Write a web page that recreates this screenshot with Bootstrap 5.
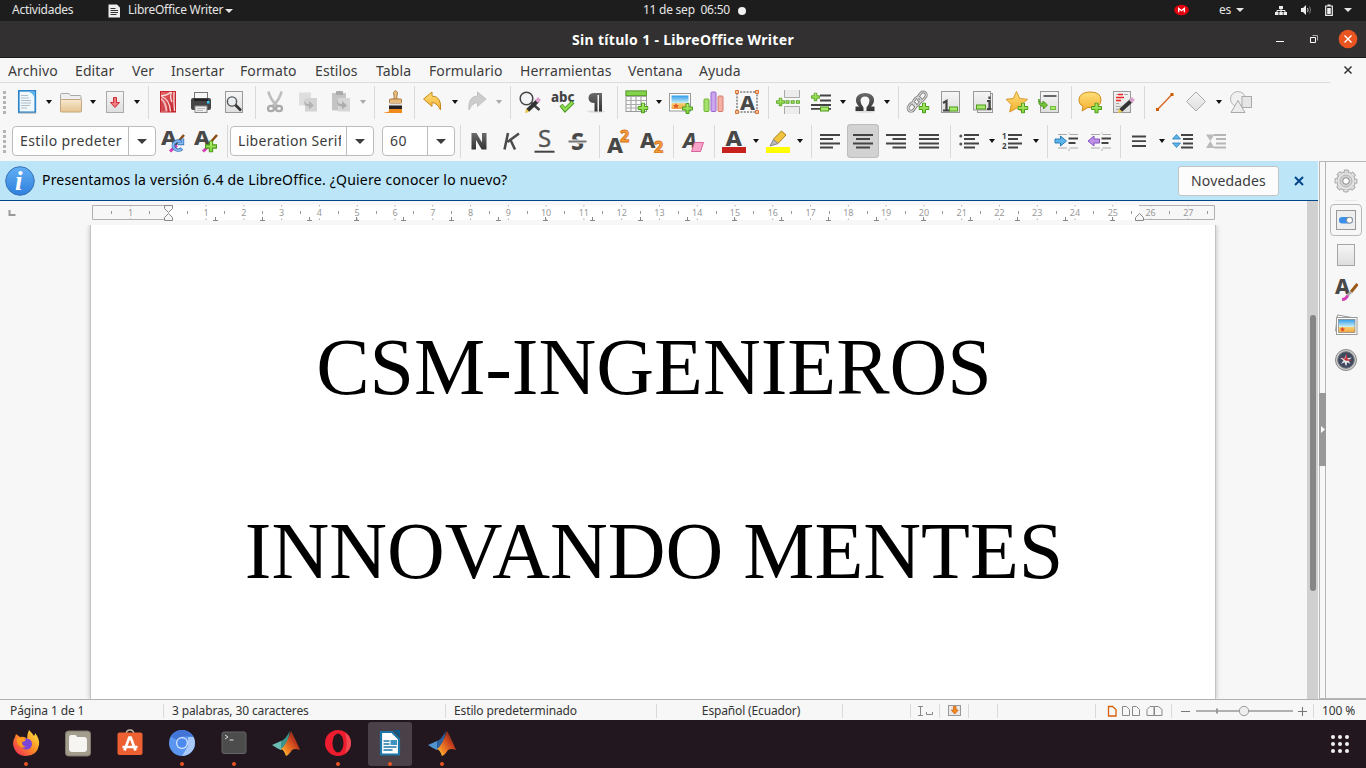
<!DOCTYPE html>
<html lang="es">
<head>
<meta charset="utf-8">
<meta name="viewport" content="width=device-width, initial-scale=1">
<title>Sin título 1 - LibreOffice Writer</title>
<link href="https://cdn.jsdelivr.net/npm/bootstrap@5.3.0/dist/css/bootstrap.min.css" rel="stylesheet">
<style>
html,body{height:100%}
body{width:1366px;height:768px;overflow:hidden;background:#f7f7f7;color:#3d3d3d;font:14px/1.2 "Noto Sans","Open Sans",sans-serif}
svg{display:block;flex:none}
svg text{font-family:"Noto Sans",sans-serif}
.panel{height:21px;background:#1d1d1d;color:#e6e6e6;font-size:12px;letter-spacing:-.25px}
.panel-cell{white-space:pre}
.panel .activities{width:107px;padding-left:12px}
.app-name{margin-left:7px;width:93px}
.panel .clock{margin-left:410px;width:95px}
.tray{padding-right:14px}
.lang{margin:0 6px 0 30px;width:11px}
.net{margin-left:31px}.vol{margin-left:13px}.bat{margin-left:13px}.last{margin-left:11px}
.titlebar{height:37px;background:#323031;border-bottom:1px solid #1c1a1b;color:#fff;font-weight:700;font-size:14px}
.wbtns{width:94px}
.win-title{letter-spacing:.32px;padding-top:2px}
.tri{width:0;height:0;border:4px solid transparent;border-top-color:currentColor;border-bottom:0}
.menus{height:25px;width:1330px;border-bottom:1px solid #dcdcdc;display:grid;grid-template-columns:67px 57px 39px 69px 75px 61px 53px 91px 108px 71px 60px;padding:2px 0 0 8px;letter-spacing:.1px}
.tools{height:38px;padding-left:3px}
.tools.second{height:40px}
.grip{width:3px;height:23px;margin-right:5px;background:repeating-linear-gradient(#b4b4b4 0 3px,transparent 3px 5px)}
.tb{width:32px;height:33px;display:flex;align-items:center;justify-content:center}
.tb + .tb{margin-left:1px}
.tb.on{background:#d2d2d2;border-radius:4px;box-shadow:0 0 0 1px #bdbdbd inset;height:34px}
.dd{width:12px;display:flex;justify-content:center;color:#111}
.dd.off{color:#aaa}
.dd .tri{border-width:4px 3.5px 0}
.vsep{width:9px;height:33px;padding-left:5px}
.vsep::before{content:"";display:block;width:1px;height:100%;background:#d9d9d9}
.vsep.tight{width:8px}
.combo{height:30px;background:#fff;border:1px solid #bcbcbc;border-radius:4px;white-space:nowrap}
.combo .val{margin-left:7px;width:103px;overflow:hidden;height:100%;line-height:27px;letter-spacing:.38px}
.combo .drop{width:27px;height:100%;border-left:1px solid #bcbcbc;color:#3d3d3d}
.combo .tri{border-width:5px 5px 0}
.c-wide{width:144px}
.c-size{width:73px}
.combo.c-size .val{width:38px}
.combo.c-font .val{letter-spacing:.3px}
.part{padding-left:1px}
.doc-col{width:1318px}
.infobar{height:40px;background:#bde5f8;border-bottom:1px solid #00478a;color:#000;padding-left:5px}
.infobar .msg{font-size:14px;margin-left:7px;letter-spacing:.19px}
.btn-news{height:30px;width:101px;border:1px solid #c4c4c4;border-radius:3px;background:#fcfcfc;padding:0;font-size:14px;letter-spacing:.15px;color:#3d3d3d}
.closer{margin:0 14px 0 15px}
.scrolltrack{width:11px;background:#d0d0d0;padding:114px 2px 0 3px}
.thumb{width:6px;height:276px;border-radius:3px;background:#868686}
.sheet{width:1126px;margin-left:90px;background:#fff;border:solid #c3c3c3;border-width:0 1px;box-shadow:0 0 5px rgba(0,0,0,.25);padding:96px 0 0 2px;font:80px/92px "Liberation Serif",serif;color:#000;text-align:center}
.clip{overflow:hidden}
.split{width:7px;margin-left:1px;border:1px solid #b5b5b5}
.split .knob{width:7px;height:73px;margin:231px 0 0 -1px;background:#999}
.side{border-top:1px solid #b5b5b5;border-bottom:1px solid #b5b5b5;width:40px}
.side .pick{width:32px;height:32px;border:1px solid #b9b9b9;border-radius:4px}
.s1{margin-top:6px}
.s2{width:22px;margin:6px 0 3px;border-top:1px solid #bbb}
.s3{margin-top:8px}.s4{margin-top:11px}.s5{margin-top:12px}.s6{margin-top:11px}
.status{height:21px;border-top:1px solid #b0b0b0;font-size:12px;display:grid;grid-template-columns:164px 282px 211px 186px 68px 29px 29px 29px 98px 76px 142px 52px;letter-spacing:-.12px;color:#333}
.status > div{display:flex;align-items:center;border-right:1px solid #dadada;height:14px;margin-top:4px;white-space:nowrap}
.status > div:last-child{border:0}
.st1{padding-left:10px}.st2{padding-left:8px}
.st-lang{padding-left:3px;letter-spacing:-.15px}
.dock{height:48px;background:#22171f}
.app{width:44px;height:44px;margin:2px 8px 0 0;border-radius:3px;position:relative;display:flex;justify-content:center;padding-top:7px}
.app.on{background:#4a4148}
.app.run::after{content:"";position:absolute;left:20px;top:40px;width:4px;height:4px;border-radius:50%;background:#e95420}
.grid-btn{margin:14px 16px 0 0}
</style>
</head>
<body class="d-flex flex-column">

<!-- icon sprite -->
<svg width="0" height="0" class="position-absolute">
<defs>
<linearGradient id="gPaper" x2="0" y2="1"><stop stop-color="#f6f6f6"/><stop offset="1" stop-color="#dedede"/></linearGradient>
<linearGradient id="gSand" x2="0" y2="1"><stop stop-color="#f6e7cf"/><stop offset="1" stop-color="#e6c48f"/></linearGradient>
<linearGradient id="gGold" x2="0" y2="1"><stop stop-color="#ffe07a"/><stop offset="1" stop-color="#f3ae2f"/></linearGradient>
<linearGradient id="gDark" x2="0" y2="1"><stop stop-color="#6a6a6a"/><stop offset="1" stop-color="#333"/></linearGradient>
<linearGradient id="gSky" x2="0" y2="1"><stop stop-color="#2f9be8"/><stop offset=".55" stop-color="#c9edf5"/><stop offset=".6" stop-color="#f7cf6c"/><stop offset="1" stop-color="#efa544"/></linearGradient>
<linearGradient id="gPlus" x2="0" y2="1"><stop stop-color="#b4f070"/><stop offset="1" stop-color="#7bd03a"/></linearGradient>
<linearGradient id="gRed" x2="1" y2="1"><stop stop-color="#e8676b"/><stop offset="1" stop-color="#bf1f27"/></linearGradient>
<linearGradient id="gFlame" x1="1" y1="0" x2="0" y2="1"><stop stop-color="#3c1420"/><stop offset=".4" stop-color="#c8401c"/><stop offset=".75" stop-color="#f48b26"/><stop offset="1" stop-color="#ffe14a"/></linearGradient>
<linearGradient id="gFox" x1="1" x2="0" y2="1"><stop stop-color="#fff04a"/><stop offset=".45" stop-color="#ff9422"/><stop offset="1" stop-color="#f01e5c"/></linearGradient>
<linearGradient id="gInfo" x2="0" y2="1"><stop stop-color="#63b0f5"/><stop offset="1" stop-color="#2d7fdc"/></linearGradient>
<symbol id="plus" viewBox="0 0 11 11"><path d="M4 .5h3V4h3.500v3H7v3.500H4V7H.5V4H4z" fill="url(#gPlus)" stroke="#4e9a1c"/></symbol>
<symbol id="new" viewBox="0 0 24 24"><rect x="3.800" y=".8" width="16.500" height="21.500" fill="#eef8fd" stroke="#2d86cb" stroke-width="1.700"/><path d="M14 2h5.500v6c-1-3-2-5-5.500-6z" fill="#4fb5ee"/><path d="M6 5.500h7M6 8h8M6 10.500h10M6 13h10M6 15.500h9M6 18h6" stroke="#b1bcc4" stroke-width="1"/><path d="M4 23h17" stroke="#aaa" stroke-width=".8"/></symbol>
<symbol id="open" viewBox="0 0 24 24"><path d="M1.500 21V4.500q0-1 1-1H10l1.500 2H21q1 0 1 1V21z" fill="#efefef" stroke="#aaa"/><rect x="1.500" y="9.500" width="21" height="12.500" rx="1" fill="url(#gSand)" stroke="#c2a77c"/></symbol>
<symbol id="save" viewBox="0 0 24 24"><rect x="3.500" y="1.500" width="17" height="21" fill="url(#gPaper)" stroke="#aaa"/><path d="M10.500 7.500h3v5h3L12 17.500l-4.500-5h3z" fill="#f07a80" stroke="#cc2b34"/></symbol>
<symbol id="pdf" viewBox="0 0 24 24"><rect x="4.500" y="1.500" width="15" height="20.500" fill="url(#gRed)" stroke="#c5262e"/><path d="M5 5.500Q11 6 14.500 2M5.500 6.500Q13.500 9 14.500 21.500M15.500 2q-2 5 .5 10M18 2q-.5 10 .5 19" fill="none" stroke="#f9dcdc" stroke-width="1.300"/><path d="M5 8q6 3 6.500 13.500H5z" fill="#f3b9bb"/><path d="M5 10q4 3 4.500 11.500H5z" fill="#cf4a50"/></symbol>
<symbol id="print" viewBox="0 0 24 24"><rect x="5.500" y="2.500" width="13" height="8" fill="#f7f7f7" stroke="#777"/><rect x="2" y="8" width="20" height="12" rx="2" fill="#454545"/><path d="M5 10h14" stroke="#222" stroke-width="2"/><rect x="18" y="11" width="2.500" height="2.500" fill="#32c8f4"/><rect x="6" y="16" width="12" height="6.500" fill="#eee" stroke="#888"/><path d="M8 18.500h8M8 20.500h6" stroke="#bbb"/></symbol>
<symbol id="preview" viewBox="0 0 24 24"><rect x="3.500" y="1.500" width="17" height="21" fill="url(#gPaper)" stroke="#999"/><circle cx="10" cy="11.500" r="4.600" fill="#eaeef0" stroke="#555" stroke-width="1.400"/><path d="M13.500 15l5.500 5.500" stroke="#333" stroke-width="2.600"/></symbol>
<symbol id="cut" viewBox="0 0 24 24"><path d="M5.500 1.500Q6.500 8 14 16M18.500 1.500Q17.500 8 10 16" fill="none" stroke="#bdbdbd" stroke-width="2.600"/><ellipse cx="8" cy="18.500" rx="3" ry="2.700" fill="none" stroke="#aaa" stroke-width="2.300"/><ellipse cx="16" cy="18.500" rx="3" ry="2.700" fill="none" stroke="#aaa" stroke-width="2.300"/></symbol>
<symbol id="copy" viewBox="0 0 24 24"><rect x="3" y="2.500" width="12" height="13" fill="#dedede"/><rect x="9" y="8" width="12" height="13.500" fill="#d3d3d3"/><path d="M8 9q0 5 5 5v-3l5 4.500-5 4v-3q-6 0-5-7.500z" fill="#b2b2b2"/></symbol>
<symbol id="paste" viewBox="0 0 24 24"><rect x="3" y="3" width="14" height="17.500" rx="1" fill="#c4c4c4"/><rect x="7" y="1" width="7" height="4" rx="1" fill="#aaa"/><rect x="9" y="8" width="12" height="13.500" fill="#d6d6d6"/><path d="M8 9q0 5 5 5v-3l5 4.500-5 4v-3q-6 0-5-7.500z" fill="#adadad"/></symbol>
<symbol id="brush" viewBox="0 0 24 24"><path d="M12.800 9.500l.4-3-.7-4q2-3.500 4 0l-.7 4 .4 3z" fill="#eabf83" stroke="#a7773c"/><rect x="8.500" y="9" width="12" height="4.500" rx="1" fill="#e7bd82" stroke="#a7773c"/><rect x="8" y="13.500" width="13" height="2.500" fill="#e5e5e5"/><rect x="8" y="15.500" width="13" height="4" fill="#222"/><path d="M8 19h13v4H2l6-1.500z" fill="#f08a1c"/></symbol>
<symbol id="undo" viewBox="0 0 24 24"><path d="M2.500 9l8.500-7v4Q21 6.500 19.500 20 16.500 13 11 12.500v4z" fill="url(#gGold)" stroke="#c68a1e"/></symbol>
<symbol id="redo" viewBox="0 0 24 24"><path d="M21 9l-8.500-7v4Q2.500 6.500 4 20 7 13 12.500 12.500v4z" fill="#cdcdcd" stroke="#c2c2c2"/></symbol>
<symbol id="find" viewBox="0 0 24 24"><circle cx="8.500" cy="8.500" r="6.300" fill="#f2f4f5" stroke="#444" stroke-width="1.500"/><path d="M13.500 13l8 7" stroke="#444" stroke-width="2.500"/><path d="M9.500 20.500L20 10.500" stroke="#333" stroke-width="4"/><path d="M18.500 11.500l3-3" stroke="#d9a0cc" stroke-width="4"/><path d="M7 23l1-4.500 3.500 3.500z" fill="#e8c84c"/></symbol>
<symbol id="spell" viewBox="0 0 24 24"><text x="0" y="12" font-size="14" font-weight="800" fill="#444" textLength="23.500" lengthAdjust="spacingAndGlyphs">abc</text><path d="M10 15l4 5L22 12" fill="none" stroke="#4c9a22" stroke-width="4"/><path d="M10.500 15.500l3.500 4.200L21.500 12.500" fill="none" stroke="#92e052" stroke-width="2.200"/></symbol>
<symbol id="pilcrow" viewBox="0 0 24 24"><ellipse cx="12" cy="21.500" rx="9" ry="1.300" fill="#ddd"/><path d="M18 3v18.500h-3V5h-1.500v16.500h-3V13Q4.500 13 4.500 8 4.500 3 10.500 3z" fill="url(#gDark)"/></symbol>
<symbol id="table" viewBox="0 0 24 24"><rect x="1" y="1" width="20.500" height="20.500" fill="#fafafa" stroke="#999"/><path d="M1 6.500h20M1 10.500h20M1 14.500h20M1 18h20M6 5v16M11 5v16M16 5v16" stroke="#aaa" stroke-width="1.200"/><rect x="1" y="1" width="20.500" height="4.500" fill="#85d34c" stroke="#5aa52b"/><use href="#plus" x="12.500" y="12.500" width="11" height="11"/></symbol>
<symbol id="image" viewBox="0 0 24 24"><rect x=".5" y="3.500" width="21" height="17.500" fill="#fff" stroke="#999"/><rect x="2.500" y="5.500" width="17" height="13.500" fill="url(#gSky)"/><path d="M7 13l1 2h2l-1.500 1.500.5 2-2-1-2 1 .5-2L4 15h2z" fill="#e2572e"/><use href="#plus" x="13" y="13" width="11" height="11"/></symbol>
<symbol id="chart" viewBox="0 0 24 24"><rect x="2" y="9" width="5" height="12.500" rx="1" fill="#a6e06d" stroke="#6bb533"/><rect x="9" y="2" width="5" height="19.500" rx="1" fill="#cda5ee" stroke="#9a68cf"/><rect x="16" y="6" width="5" height="15.500" rx="1" fill="#f4b0a4" stroke="#d57a6a"/></symbol>
<symbol id="textbox" viewBox="0 0 24 24"><rect x="2" y="2" width="20" height="20" fill="none" stroke="#444" stroke-dasharray="2 1.200"/><text x="5" y="19.500" font-size="20" font-weight="800" fill="#484848" textLength="15" lengthAdjust="spacingAndGlyphs">A</text><g fill="#fac090" stroke="#d8743c"><path d="M.5.500h3v3h-3zM20.500.500h3v3h-3zM.5 20.500h3v3h-3zM20.500 20.500h3v3h-3z"/></g></symbol>
<symbol id="pbreak" viewBox="0 0 24 24"><path d="M8.500 0v7.500h15V0M8.500 24v-7.500h15V24" fill="#ececec" stroke="#aaa"/><path d="M9.500 12H24" stroke="#5aa52b" stroke-width="3.500" stroke-dasharray="4 1.200"/><path d="M10.500 12H24" stroke="#a8e86b" stroke-width="1.500" stroke-dasharray="2 3.200"/><use href="#plus" x="0" y="7.500" width="9" height="9"/></symbol>
<symbol id="field" viewBox="0 0 24 24"><path d="M11 5.500h11M11 10.500h11M2 15h20M2 18.800h20" stroke="#444" stroke-width="1.800"/><use href="#plus" x="2" y="2.500" width="9" height="9"/><rect x="11.500" y="17" width="8" height="4" fill="#a8e86b" stroke="#4e9a1c"/></symbol>
<symbol id="omega" viewBox="0 0 24 24"><ellipse cx="12" cy="21.500" rx="10" ry="1.300" fill="#ddd"/><path d="M2.500 21v-4.500h3.500Q2.500 13 3 9.500 4 3 12 3t9 6.500q.5 3.500-3 7h3.500V21h-8v-3.500q3-3.500 3-7Q16 6.500 12 6.500T7.500 10.500q0 3.500 3 7V21z" fill="url(#gDark)"/></symbol>
<symbol id="link" viewBox="0 0 24 24"><g fill="none" stroke="#7c7c7c" stroke-width="2.800"><rect x="13" y="1.500" width="6" height="10" rx="3" transform="rotate(38 16 6.500)"/><rect x="8" y="7" width="6" height="9" rx="3" transform="rotate(38 11 11.500)"/><rect x="3" y="12.500" width="6" height="9" rx="3" transform="rotate(38 6 17)"/></g><g fill="none" stroke="#ddd" stroke-width="1.100"><rect x="13" y="1.500" width="6" height="10" rx="3" transform="rotate(38 16 6.500)"/><rect x="8" y="7" width="6" height="9" rx="3" transform="rotate(38 11 11.500)"/><rect x="3" y="12.500" width="6" height="9" rx="3" transform="rotate(38 6 17)"/></g><use href="#plus" x="12.500" y="12.500" width="11" height="11"/></symbol>
<symbol id="foot" viewBox="0 0 24 24"><rect x="2.500" y="1.500" width="18" height="21" fill="url(#gPaper)" stroke="#999"/><path d="M4 13l3.500-2v9.500M4 20.500h7" fill="none" stroke="#444" stroke-width="2.200"/><rect x="10.500" y="17" width="8" height="4" fill="#a8e86b" stroke="#4e9a1c"/></symbol>
<symbol id="endn" viewBox="0 0 24 24"><rect x="5.500" y="3.500" width="15" height="19" fill="#eee" stroke="#999"/><rect x="1.500" y="1.500" width="17" height="18.500" fill="url(#gPaper)" stroke="#999"/><rect x="4.500" y="15" width="9" height="4" fill="#a8e86b" stroke="#4e9a1c"/><path d="M15 11h2.500v8M15 19h4.500M17.500 6.500v2.500" stroke="#444" stroke-width="2.200" fill="none"/></symbol>
<symbol id="star" viewBox="0 0 24 24"><path d="M11.500 1.500l3.200 7 7.800.8-5.800 5.200 1.600 7.500-6.800-3.800L4.700 22l1.600-7.500L1 9.300l7.300-.8z" fill="url(#gGold)" stroke="#d99a2b"/><use href="#plus" x="12.500" y="12.500" width="11" height="11"/></symbol>
<symbol id="xref" viewBox="0 0 24 24"><rect x="2.500" y="1.500" width="18" height="21" fill="url(#gPaper)" stroke="#999"/><path d="M5.500 6h13" stroke="#444" stroke-width="1.600"/><path d="M1 9q0 4.500 4 4.500v-2.500L9.500 15 5.500 19v-2.500Q-.5 16 1 9z" fill="#74c23d" stroke="#4e9a1c"/><rect x="12.500" y="16.500" width="5" height="3" fill="#a8e86b" stroke="#6fbf3a"/></symbol>
<symbol id="comment" viewBox="0 0 24 24"><path d="M12 2C5 2 1 5.500 1 10c0 3 1.500 5 4 6.500L4 21l6-3.500q13 1 13-7.500 0-8-11-8z" fill="url(#gGold)" stroke="#d18c1d"/><use href="#plus" x="13" y="12.500" width="11" height="11"/></symbol>
<symbol id="track" viewBox="0 0 24 24"><rect x="2.500" y="1.500" width="17" height="21" fill="url(#gPaper)" stroke="#999"/><path d="M5 4.500h5M13 4.500h4M5 13.500h3M5 16.500h5M5 19.500h4" stroke="#aaa"/><path d="M7 4.500h5M5 7.500h8M5 10.500h5" stroke="#e22" stroke-width="1.300"/><path d="M9.500 20.500L20.500 10.500" stroke="#333" stroke-width="4"/><path d="M19.500 11.500l3-3" stroke="#d9a0cc" stroke-width="4"/><path d="M7 23l1-4.500 3.500 3.500z" fill="#e8c84c"/></symbol>
<symbol id="line" viewBox="0 0 24 24"><path d="M5.500 19.500L19.500 5" stroke="#d9661f" stroke-width="1.400"/><path d="M4 18h3v3H4zM18.500 3h3v3h-3z" fill="#ce5c00"/></symbol>
<symbol id="diamond" viewBox="0 0 24 24"><path d="M11 2l9.500 9.500L11 21 1.500 11.500z" fill="url(#gPaper)" stroke="#aaa"/></symbol>
<symbol id="shapes" viewBox="0 0 24 24"><circle cx="9" cy="9" r="7.500" fill="#f0f0f0" stroke="#b5b5b5"/><rect x="13" y="6.500" width="9.500" height="11" fill="#e6e6e6" stroke="#aaa"/><path d="M9 10.500l7 12H2z" fill="#ececec" stroke="#aaa"/></symbol>
<symbol id="styA" viewBox="0 0 24 24"><path d="M15 15L23 6" stroke="#8a4a12" stroke-width="2.500"/><path d="M9 22.500q4-4 7-6" stroke="#d63fb5" stroke-width="3"/><text x="0" y="15.500" font-size="20" font-weight="800" fill="#484848" textLength="16" lengthAdjust="spacingAndGlyphs">A</text></symbol>
<symbol id="styUp" viewBox="0 0 24 24"><use href="#styA" width="24" height="24"/><path d="M21 19.500a5 4.500 0 1 1-1.500-7M21.500 9.500v5h-5" fill="none" stroke="#3b78c2" stroke-width="3.400"/><path d="M20.800 19.700a5 4.500 0 1 1-1.300-7M21.500 10v4.500h-4.500" fill="none" stroke="#8cbcf0" stroke-width="1.600"/></symbol>
<symbol id="styNew" viewBox="0 0 24 24"><use href="#styA" width="24" height="24"/><use href="#plus" x="11" y="11.500" width="12" height="12"/></symbol>
<symbol id="bold" viewBox="0 0 24 24"><path d="M4.500 20.500V4h5l5.500 9.500V4h4.500v16.500h-4.800L9 11v9.500z" fill="url(#gDark)"/></symbol>
<symbol id="ital" viewBox="0 0 24 24"><path d="M8 4L4.500 20.500M19 4.500L7.500 13M10.500 11L15 20.500" stroke="#4a4a4a" stroke-width="2.500" fill="none"/></symbol>
<symbol id="under" viewBox="0 0 24 24"><text x="5" y="18" font-size="24" fill="#555" stroke="#555" stroke-width=".3">S</text><path d="M1.500 22.700h20" stroke="#444" stroke-width="2"/></symbol>
<symbol id="strike" viewBox="0 0 24 24"><text x="5" y="20.500" font-size="23" font-weight="800" fill="#484848">S</text><path d="M2.500 12.500h18" stroke="#f7f7f7" stroke-width="4"/><path d="M2.500 12.500h18" stroke="#777" stroke-width="2"/></symbol>
<symbol id="sup" viewBox="0 0 24 24"><text x="0" y="24" font-size="22" font-weight="800" fill="#484848" textLength="16" lengthAdjust="spacingAndGlyphs">A</text><text x="13" y="12.800" font-size="16" font-weight="800" fill="#f59e3a" stroke="#d4701a" stroke-width=".8">2</text></symbol>
<symbol id="subs" viewBox="0 0 24 24"><text x="0" y="18.500" font-size="21" font-weight="800" fill="#484848" textLength="15.500" lengthAdjust="spacingAndGlyphs">A</text><text x="14" y="24" font-size="16" font-weight="800" fill="#f59e3a" stroke="#d4701a" stroke-width=".8">2</text></symbol>
<symbol id="erase" viewBox="0 0 24 24"><text x="2" y="19" font-size="21" font-style="italic" font-weight="800" fill="#484848">A</text><path d="M13.500 13.500h9l-3 9H10.500z" fill="#f8a4c8" stroke="#d8649a"/></symbol>
<symbol id="fcol" viewBox="0 0 24 24"><text x="3.500" y="16.500" font-size="22" font-weight="800" fill="#484848" textLength="16.500" lengthAdjust="spacingAndGlyphs">A</text><rect x="0" y="18" width="24" height="6" fill="#c9211e"/></symbol>
<symbol id="hilite" viewBox="0 0 24 24"><path d="M6 15l2-5.500L15.500 2l4.500 4-8 8.500z" fill="#f0c43c" stroke="#a8801e"/><path d="M4 17l3.500-6.500 4.500 4z" fill="#bbb" stroke="#888"/><rect x="0" y="18" width="24" height="6" fill="#ff0"/></symbol>
<symbol id="aL" viewBox="0 0 24 24"><path d="M2 6h20M2 10h13M2 14.500h20M2 18.500h13" stroke="#444" stroke-width="1.900"/></symbol>
<symbol id="aC" viewBox="0 0 24 24"><path d="M2 6h20M5 10h14M2 14.500h20M5 18.500h14" stroke="#444" stroke-width="1.900"/></symbol>
<symbol id="aR" viewBox="0 0 24 24"><path d="M2 6h20M8.500 10H22M2 14.500h20M8.500 18.500H22" stroke="#444" stroke-width="1.900"/></symbol>
<symbol id="aJ" viewBox="0 0 24 24"><path d="M2 6h20M2 10h20M2 14.500h20M2 18.500h20" stroke="#444" stroke-width="1.900"/></symbol>
<symbol id="bul" viewBox="0 0 24 24"><circle cx="2.800" cy="7" r="1.500" fill="#555"/><circle cx="2.800" cy="15" r="1.500" fill="#555"/><path d="M6 6h15M6 10h11M6 14.500h15M6 18.500h11" stroke="#444" stroke-width="1.900"/></symbol>
<symbol id="num" viewBox="0 0 24 24"><text x="0" y="10" font-size="8" font-weight="700" fill="#444">1</text><text x="0" y="19.500" font-size="8" font-weight="700" fill="#444">2</text><path d="M6 6h14M6 10h10M6 14.500h14M6 18.500h10" stroke="#444" stroke-width="1.900"/></symbol>
<symbol id="ind" viewBox="0 0 24 24"><path d="M4 5.500h9M15.500 5.500H24M4 19h9M15.500 19H24" stroke="#aaa"/><path d="M14.500 9.500H24M14.500 14h7" stroke="#444" stroke-width="1.800"/><path d="M15 3.500v1M15 20v2" stroke="#aaa"/><path d="M1 10h5.500V7l6 5-6 5v-3H1z" fill="#5cb6ea" stroke="#2b7cb8"/></symbol>
<symbol id="outd" viewBox="0 0 24 24"><path d="M4 5.500h9M15.500 5.500H24M4 19h9M15.500 19H24" stroke="#aaa"/><path d="M14.500 9.500H24M14.500 14h7" stroke="#444" stroke-width="1.800"/><path d="M15 3.500v1M15 20v2" stroke="#aaa"/><path d="M12.500 10H7V7l-6 5 6 5v-3h5.500z" fill="#bd90ea" stroke="#8555bd"/></symbol>
<symbol id="lines" viewBox="0 0 24 24"><path d="M4 7.500h14M4 12.200h14M4 17h14" stroke="#444" stroke-width="1.800"/></symbol>
<symbol id="spUp" viewBox="0 0 24 24"><path d="M.5 10l4-4.500 4 4.500zM.5 14h8l-4 4.500z" fill="#5cb6ea" stroke="#2b7cb8" stroke-width=".8"/><path d="M9 6h12M11 10h10M11 14.500h10M9 18.500h12" stroke="#444" stroke-width="1.900"/></symbol>
<symbol id="spDn" viewBox="0 0 24 24"><path d="M1 5.500h8.500l-4.200 6.500zM1 19h8.500l-4.200-7z" fill="#bbb"/><path d="M9 6h12M11 10h10M11 14.500h10M9 18.500h12" stroke="#b5b5b5" stroke-width="1.900"/></symbol>
</defs>
</svg>

<!-- system panel -->
<div class="panel d-flex align-items-center">
  <span class="panel-cell activities">Actividades</span>
  <svg width="14" height="16" viewBox="0 0 14 16"><path d="M1.500 1.500h8.500L13 4.500v10H1.500z" fill="#eee"/><path d="M3.500 5.500h5M3.500 7.500h7.500M3.500 9.500h7.500M3.500 11.500h6" stroke="#333" stroke-width="1.100"/></svg>
  <span class="panel-cell app-name">LibreOffice Writer</span><span class="tri ms-1"></span>
  <span class="panel-cell clock">11 de sep  06:50</span><svg width="8" height="8" viewBox="0 0 8 8"><circle cx="4" cy="4" r="4" fill="#f2f2f2"/></svg>
  <div class="tray d-flex align-items-center ms-auto">
    <svg width="15" height="12" viewBox="0 0 15 12"><ellipse cx="7.500" cy="6" rx="7.300" ry="5.200" fill="#e3000f"/><path d="M4.700 8.300v-4l2.800 2.400 2.800-2.400v4" fill="none" stroke="#fff" stroke-width="1.300"/></svg>
    <span class="lang">es</span><span class="tri"></span>
    <svg class="net" width="12" height="11" viewBox="0 0 12 11"><path d="M4 1h4v3H4zM0 7h3.500v3H0zM4.300 7h3.500v3H4.300zM8.500 7H12v3H8.500z" fill="#eee"/><path d="M2 7V5.500h8V7M6 4v3" fill="none" stroke="#eee"/></svg>
    <svg class="vol" width="12" height="12" viewBox="0 0 12 12"><path d="M1 4h2l3-3v10L3 8H1z" fill="#eee"/><path d="M7.500 4q1.200 2 0 4" fill="none" stroke="#ccc"/><path d="M9.500 2.500q2.200 3.500 0 7" fill="none" stroke="#777"/></svg>
    <svg class="bat" width="8" height="12" viewBox="0 0 8 12"><path d="M.7 2h6.600v9.300H.7zM2.500 1h3" fill="none" stroke="#eee" stroke-width="1.200"/><path d="M2.200 4h3.600v6H2.200z" fill="#eee"/></svg>
    <span class="tri last"></span>
  </div>
</div>

<!-- window title -->
<div class="titlebar d-flex align-items-center">
  <div class="wbtns"></div>
  <div class="flex-fill text-center win-title">Sin título 1 - LibreOffice Writer</div>
  <svg width="94" height="36" viewBox="0 0 94 36"><path d="M4 20.500h8" stroke="#fff"/><path d="M38.500 16.500h5v5h-5z" fill="none" stroke="#fff"/><path d="M40.500 14.500h5v5" fill="none" stroke="#aaa"/><circle cx="76" cy="18" r="9.300" fill="#e95420"/><path d="M72.500 14.500l7 7M79.500 14.500l-7 7" stroke="#fff" stroke-width="1.400"/></svg>
</div>

<!-- menu bar -->
<div class="d-flex">
  <nav class="menus align-items-center"><span>Archivo</span><span>Editar</span><span>Ver</span><span>Insertar</span><span>Formato</span><span>Estilos</span><span>Tabla</span><span>Formulario</span><span>Herramientas</span><span>Ventana</span><span>Ayuda</span></nav>
  <svg width="36" height="25" viewBox="0 0 36 25"><path d="M14.500 8.500l7 7M21.500 8.500l-7 7" stroke="#333" stroke-width="1.500"/></svg>
</div>

<div class="tools d-flex align-items-center" data-items="new v open v save v | pdf print preview | cut copy paste x ! brush ! undo v redo x | find spell pilcrow | table v image chart textbox | pbreak field v omega v | link foot endn star xref ! comment track | line diamond v shapes"><span class="grip"></span></div>

<div class="tools second d-flex align-items-center">
  <span class="grip"></span>
  <div class="combo c-wide d-flex align-items-center" style="margin-left:1px"><span class="val">Estilo predeter</span><span class="drop d-flex align-items-center justify-content-center ms-auto"><i class="tri"></i></span></div>
  <div class="d-flex align-items-center part" data-items="styUp styNew !"></div>
  <div class="combo c-wide c-font d-flex align-items-center"><span class="val">Liberation Serif</span><span class="drop d-flex align-items-center justify-content-center ms-auto"><i class="tri"></i></span></div>
  <div class="combo c-size d-flex align-items-center ms-2"><span class="val">60</span><span class="drop d-flex align-items-center justify-content-center ms-auto"><i class="tri"></i></span></div>
  <div class="d-flex align-items-center" data-items="! bold ital under strike | sup subs | erase | fcol v hilite v ! aL aC* aR aJ | bul v num v ! ind outd | lines v spUp spDn"></div>
</div>

<!-- work area -->
<main class="d-flex flex-fill clip">
  <div class="doc-col d-flex flex-column">
    <div class="infobar d-flex align-items-center">
      <svg width="30" height="30" viewBox="0 0 30 30"><circle cx="15" cy="15" r="14.300" fill="url(#gInfo)" stroke="#3a72b5"/><text x="10" y="24" font-size="27" font-weight="700" font-style="italic" fill="#fff" style="font-family:'Liberation Serif',serif">i</text></svg>
      <span class="msg">Presentamos la versión 6.4 de LibreOffice. ¿Quiere conocer lo nuevo?</span>
      <button class="btn btn-news ms-auto">Novedades</button>
      <svg class="closer" width="10" height="10" viewBox="0 0 10 10"><path d="M1 1l8 8M9 1L1 9" stroke="#00478a" stroke-width="2"/></svg>
    </div>
    <div class="d-flex flex-fill clip">
      <div class="flex-fill clip d-flex flex-column">
        <svg id="ruler" width="1307" height="24" viewBox="0 0 1307 24"></svg>
        <div class="clip flex-fill d-flex"><div class="sheet"><div>CSM-INGENIEROS</div><div>&nbsp;</div><div>INNOVANDO MENTES</div></div></div>
      </div>
      <div class="scrolltrack"><div class="thumb"></div></div>
    </div>
  </div>
  <div class="split"><div class="knob"><svg width="7" height="73" viewBox="0 0 7 73"><path d="M2 33l4 3.500L2 40z" fill="#fff"/></svg></div></div>
  <aside class="side d-flex flex-column align-items-center">
    <svg class="s1" width="26" height="26" viewBox="0 0 26 26"><circle cx="13" cy="13" r="9.700" fill="none" stroke="#999" stroke-width="3.400" stroke-dasharray="4.600 3.020" stroke-dashoffset="2.300"/><circle cx="13" cy="13" r="9.300" fill="#e2e2e2" stroke="#999"/><circle cx="13" cy="13" r="9.700" fill="none" stroke="#e2e2e2" stroke-width="1.800" stroke-dasharray="3.600 4.020" stroke-dashoffset="1.800"/><circle cx="13" cy="13" r="6" fill="#d2d2d2" stroke="#b5b5b5"/><circle cx="13" cy="13" r="3.300" fill="#fff" stroke="#888"/></svg>
    <hr class="s2">
    <div class="pick d-flex align-items-center justify-content-center"><svg width="20" height="20" viewBox="0 0 20 20"><rect x=".5" y=".5" width="19" height="19" fill="#eee" stroke="#999"/><rect x="3" y="7" width="14" height="6.500" rx="3.200" fill="#3d8ee6"/><circle cx="13.500" cy="10.200" r="3" fill="#fff" stroke="#888"/></svg></div>
    <svg class="s3" width="18" height="22" viewBox="0 0 18 22"><rect x=".5" y=".5" width="17" height="21" fill="url(#gPaper)" stroke="#a5a5a5"/></svg>
    <svg class="s4" width="24" height="24" viewBox="0 0 24 24"><text x="1" y="17" font-size="21" font-weight="800" fill="#484848">A</text><path d="M17 15l6.500-8" stroke="#9a5a1c" stroke-width="3"/><path d="M13 19l4-4" stroke="#aaa" stroke-width="2.500"/><path d="M8 22.500q4 0 5.500-4" stroke="#d63fb5" stroke-width="3" fill="none"/></svg>
    <svg class="s5" width="24" height="24" viewBox="0 0 24 24"><path d="M3.500 2l17 3v12l-19 1z" fill="#fff" stroke="#999"/><path d="M5 4l7 1.200V16H3z" fill="#35a3c4"/><rect x="2.500" y="4.500" width="20.500" height="17" fill="#fff" stroke="#999"/><rect x="4.500" y="6.500" width="16.500" height="13" fill="url(#gSky)" stroke="#777" stroke-width=".6"/><path d="M8.500 14l1 1.500H11L9.500 17l.5 1.500-1.500-.7-1.500.7.500-1.500L6 15.500h1.500z" fill="#e2472e"/></svg>
    <svg class="s6" width="24" height="24" viewBox="0 0 24 24"><circle cx="12" cy="12" r="10.500" fill="#d0d0d0" stroke="#888"/><circle cx="12" cy="12" r="8.300" fill="#3f4a60" stroke="#777"/><path d="M12 7l1.300 3.200L18 9.500l-3.500 2.700L16.500 16l-3.200-1.800L12 18.500l-1.500-4.300L7 16l2.500-3.800L6 10l4.500.2z" fill="#e6e6e6"/><path d="M12.800 5l.7 6 5 1.500-6.500.3L6 8.500l5 2.200z" fill="#c8303a"/></svg>
  </aside>
</main>

<!-- status bar -->
<footer class="status">
  <div class="st1">Página 1 de 1</div><div class="st2">3 palabras, 30 caracteres</div><div class="st2">Estilo predeterminado</div><div class="st-lang justify-content-center">Español (Ecuador)</div><div></div>
  <div><svg width="28" height="14" viewBox="0 0 28 14"><path d="M7 2.500h5M9.500 2.500v9M7 11.500h5M15.500 8v2.500h6V8" fill="none" stroke="#888"/></svg></div>
  <div><svg width="28" height="14" viewBox="0 0 28 14"><rect x="8.500" y="1.500" width="12" height="10" fill="#e8e8e8" stroke="#999"/><path d="M13.500 2.500h2.500v3.500h2.200L14.700 10 11.300 6h2.200z" fill="#f58a1c" stroke="#d0600a" stroke-width=".8"/></svg></div>
  <div></div><div></div>
  <div><svg width="75" height="14" viewBox="0 0 75 14" fill="none" stroke="#888"><path d="M12.500 2.500h4l3.500 3v6.500h-7.500z" stroke="#d4600a" stroke-width="1.300"/><path d="M26.500 2.500h4l3 3v6h-7zM36.500 2.500h4l3 3v6h-7zM51 5.500l3-3h4v9h-7zM58.500 2.500h4l3.500 3v6h-7.500z"/></svg></div>
  <div><svg width="141" height="14" viewBox="0 0 141 14"><path d="M9 7.500h9M126 7.500h9M130.500 3v9" stroke="#777" stroke-width="1.100"/><path d="M24 7h97" stroke="#999b98" stroke-width="1.600"/><path d="M45 4.500v5" stroke="#999b98" stroke-width="2"/><circle cx="72" cy="7" r="4.700" fill="#eee" stroke="#999"/></svg></div>
  <div class="st2">100 %</div>
</footer>

<!-- dock -->
<div class="dock d-flex">
  <div class="app run ms-1"><svg width="28" height="28" viewBox="0 0 28 28"><path d="M17 1q4 4 5 6 1-1 1-3 5 6 4 12-2 11-13 11T1 15q0-4 2-7l1-3 4 3q5-1 7 2 0-5 2-9z" fill="url(#gFox)"/><circle cx="14.500" cy="15" r="5.500" fill="#7b45d8"/><path d="M5 9q5-1 9 2-2 2-4 2 0 4 4 5-7 2-9-5z" fill="#ff9a20"/></svg></div>
  <div class="app"><svg width="28" height="28" viewBox="0 0 28 28"><rect x="1.500" y="2" width="25" height="25" rx="3" fill="#a29d8c" stroke="#7c776a"/><path d="M5 9q0-3 2-3h4q2 0 2 2h7q3 0 3 3v9q0 3-3 3H8q-3 0-3-3z" fill="#f6f5f2"/></svg></div>
  <div class="app"><svg width="28" height="28" viewBox="0 0 28 28"><path d="M10 6q0-5 4-5t4 5" fill="none" stroke="#c5b6a0" stroke-width="1.500"/><rect x="1.500" y="3.500" width="25" height="22.500" rx="2" fill="#ec6032"/><path d="M8.500 21.500L13.300 8.500h1.400l4.800 13M6.500 18h15" fill="none" stroke="#fff" stroke-width="2.700"/></svg></div>
  <div class="app run"><svg width="28" height="28" viewBox="0 0 28 28"><circle cx="14" cy="14" r="13" fill="#5a96ef"/><path d="M14 14L2.700 7.500A13 13 0 0 1 25.300 7.500H14z" fill="#4375d8"/><path d="M14 27l6-10V8h5.500A13 13 0 0 1 14 27z" fill="#a9c8fa"/><circle cx="14" cy="14" r="6" fill="#dfeafe"/><circle cx="14" cy="14" r="4.800" fill="#4c8af0"/></svg></div>
  <div class="app run"><svg width="28" height="28" viewBox="0 0 28 28"><rect x="2" y="3" width="24" height="21.500" rx="2" fill="#4c4c4c" stroke="#646464"/><path d="M5 6l3 2-3 2M9.500 11h4" fill="none" stroke="#ddd"/></svg></div>
  <div class="app"><svg width="28" height="28" viewBox="0 0 28 28"><path d="M0 16l9-4 5 4-5 5q-3-1-9-5z" fill="#6bbcb2"/><path d="M9 12q4-1 9-10l-3 14-6 4z" fill="#3c938c"/><path d="M9 20q5-3 10-18 3 5 9 19-5-2-8 0-3 5-6 6-2-6-5-7z" fill="url(#gFlame)"/></svg></div>
  <div class="app run"><svg width="28" height="28" viewBox="0 0 28 28"><circle cx="14" cy="14" r="13" fill="#ed1c2e"/><path d="M21 3.500q6 4 6 10.500t-6 10.500q3.500-10 0-21z" fill="#f04a50"/><ellipse cx="14" cy="14" rx="5.500" ry="9.500" fill="#22171f"/></svg></div>
  <div class="app run on"><svg width="28" height="28" viewBox="0 0 28 28"><path d="M5 3h11l7 7v15.500H5z" fill="#fff" stroke="#1d77a8" stroke-width="2.200"/><path d="M17 1h7v7z" fill="#0e5c8c"/><path d="M7.500 12h6M7.500 15h6M7.500 18h13M7.500 21h9" stroke="#1d77a8" stroke-width="1.500"/><rect x="14.500" y="11" width="6.500" height="5" fill="#3d92c0"/></svg></div>
  <div class="app run"><svg width="28" height="28" viewBox="0 0 28 28"><path d="M0 16l9-4 5 4-5 5q-3-1-9-5z" fill="#4f93cf"/><path d="M9 12q4-1 9-10l-3 14-6 4z" fill="#2d5f9c"/><path d="M9 20q5-3 10-18 3 5 9 19-5-2-8 0-3 5-6 6-2-6-5-7z" fill="url(#gFlame)"/></svg></div>
  <svg class="ms-auto grid-btn" width="20" height="20" viewBox="0 0 20 20" fill="#f0f0f0"><g id="dots"><circle cx="3" cy="3" r="2"/><circle cx="10" cy="3" r="2"/><circle cx="17" cy="3" r="2"/></g><use href="#dots" y="7"/><use href="#dots" y="14"/></svg>
</div>

<script src="https://cdn.jsdelivr.net/npm/bootstrap@5.3.0/dist/js/bootstrap.bundle.min.js"></script>
<script>
// toolbars: v / x = enabled / disabled arrow, | and ! = separators, * = pressed
document.querySelectorAll('[data-items]').forEach(function (bar) {
  bar.insertAdjacentHTML('beforeend', bar.dataset.items.split(' ').map(function (t) {
    if (t === 'v') return '<span class="dd"><i class="tri"></i></span>';
    if (t === 'x') return '<span class="dd off"><i class="tri"></i></span>';
    if (t === '|') return '<span class="vsep"></span>';
    if (t === '!') return '<span class="vsep tight"></span>';
    var on = t.endsWith('*'), id = t.replace('*', '');
    return '<span class="tb' + (on ? ' on' : '') + '"><svg width="24" height="24"><use href="#' + id + '"/></svg></span>';
  }).join(''));
});
// ruler: one unit is a centimetre, zero at the left margin
(function () {
  var cm = 37.78, zero = 168.3, s = '<rect x="168" y="4" width="971" height="15" fill="#fff"/>' +
    '<path d="M168 4.500H92.500v14H168M1139 4.500h75.500v14H1139" fill="none" stroke="#b0b0b0"/>' +
    '<path d="M9.500 9v5h6" fill="none" stroke="#999" stroke-width="2"/>';
  for (var i = -1; i <= 27; i++) {
    var x = zero + i * cm;
    if (i) s += '<text x="' + x + '" y="14.500" font-size="9" fill="#999" text-anchor="middle">' + Math.abs(i) + '</text><path d="M' + x + ' 4v1.500M' + x + ' 17.500v1.500" stroke="#aaa"/>';
  }
  for (var h = -1.5; h <= 27.5; h += 1) s += '<path d="M' + (Math.floor(zero + h * cm) + .5) + ' 10v3" stroke="#999"/>';
  for (var t = 1; t <= 20; t++) { var p = Math.round(zero + t * 1.25 * cm) - .5; s += '<path d="M' + p + ' 16v3.500M' + (p - 2.500) + ' 19.500h5" stroke="#888"/>'; }
  s += '<path d="M164.500 4.500h8v3l-4 4-4-4zM164.500 19.500h8v-3l-4-4-4 4zM1135.500 19.500h8v-3l-4-4-4 4z" fill="#f7f7f7" stroke="#888"/>';
  document.getElementById('ruler').innerHTML = s;
})();
</script>
</body>
</html>
